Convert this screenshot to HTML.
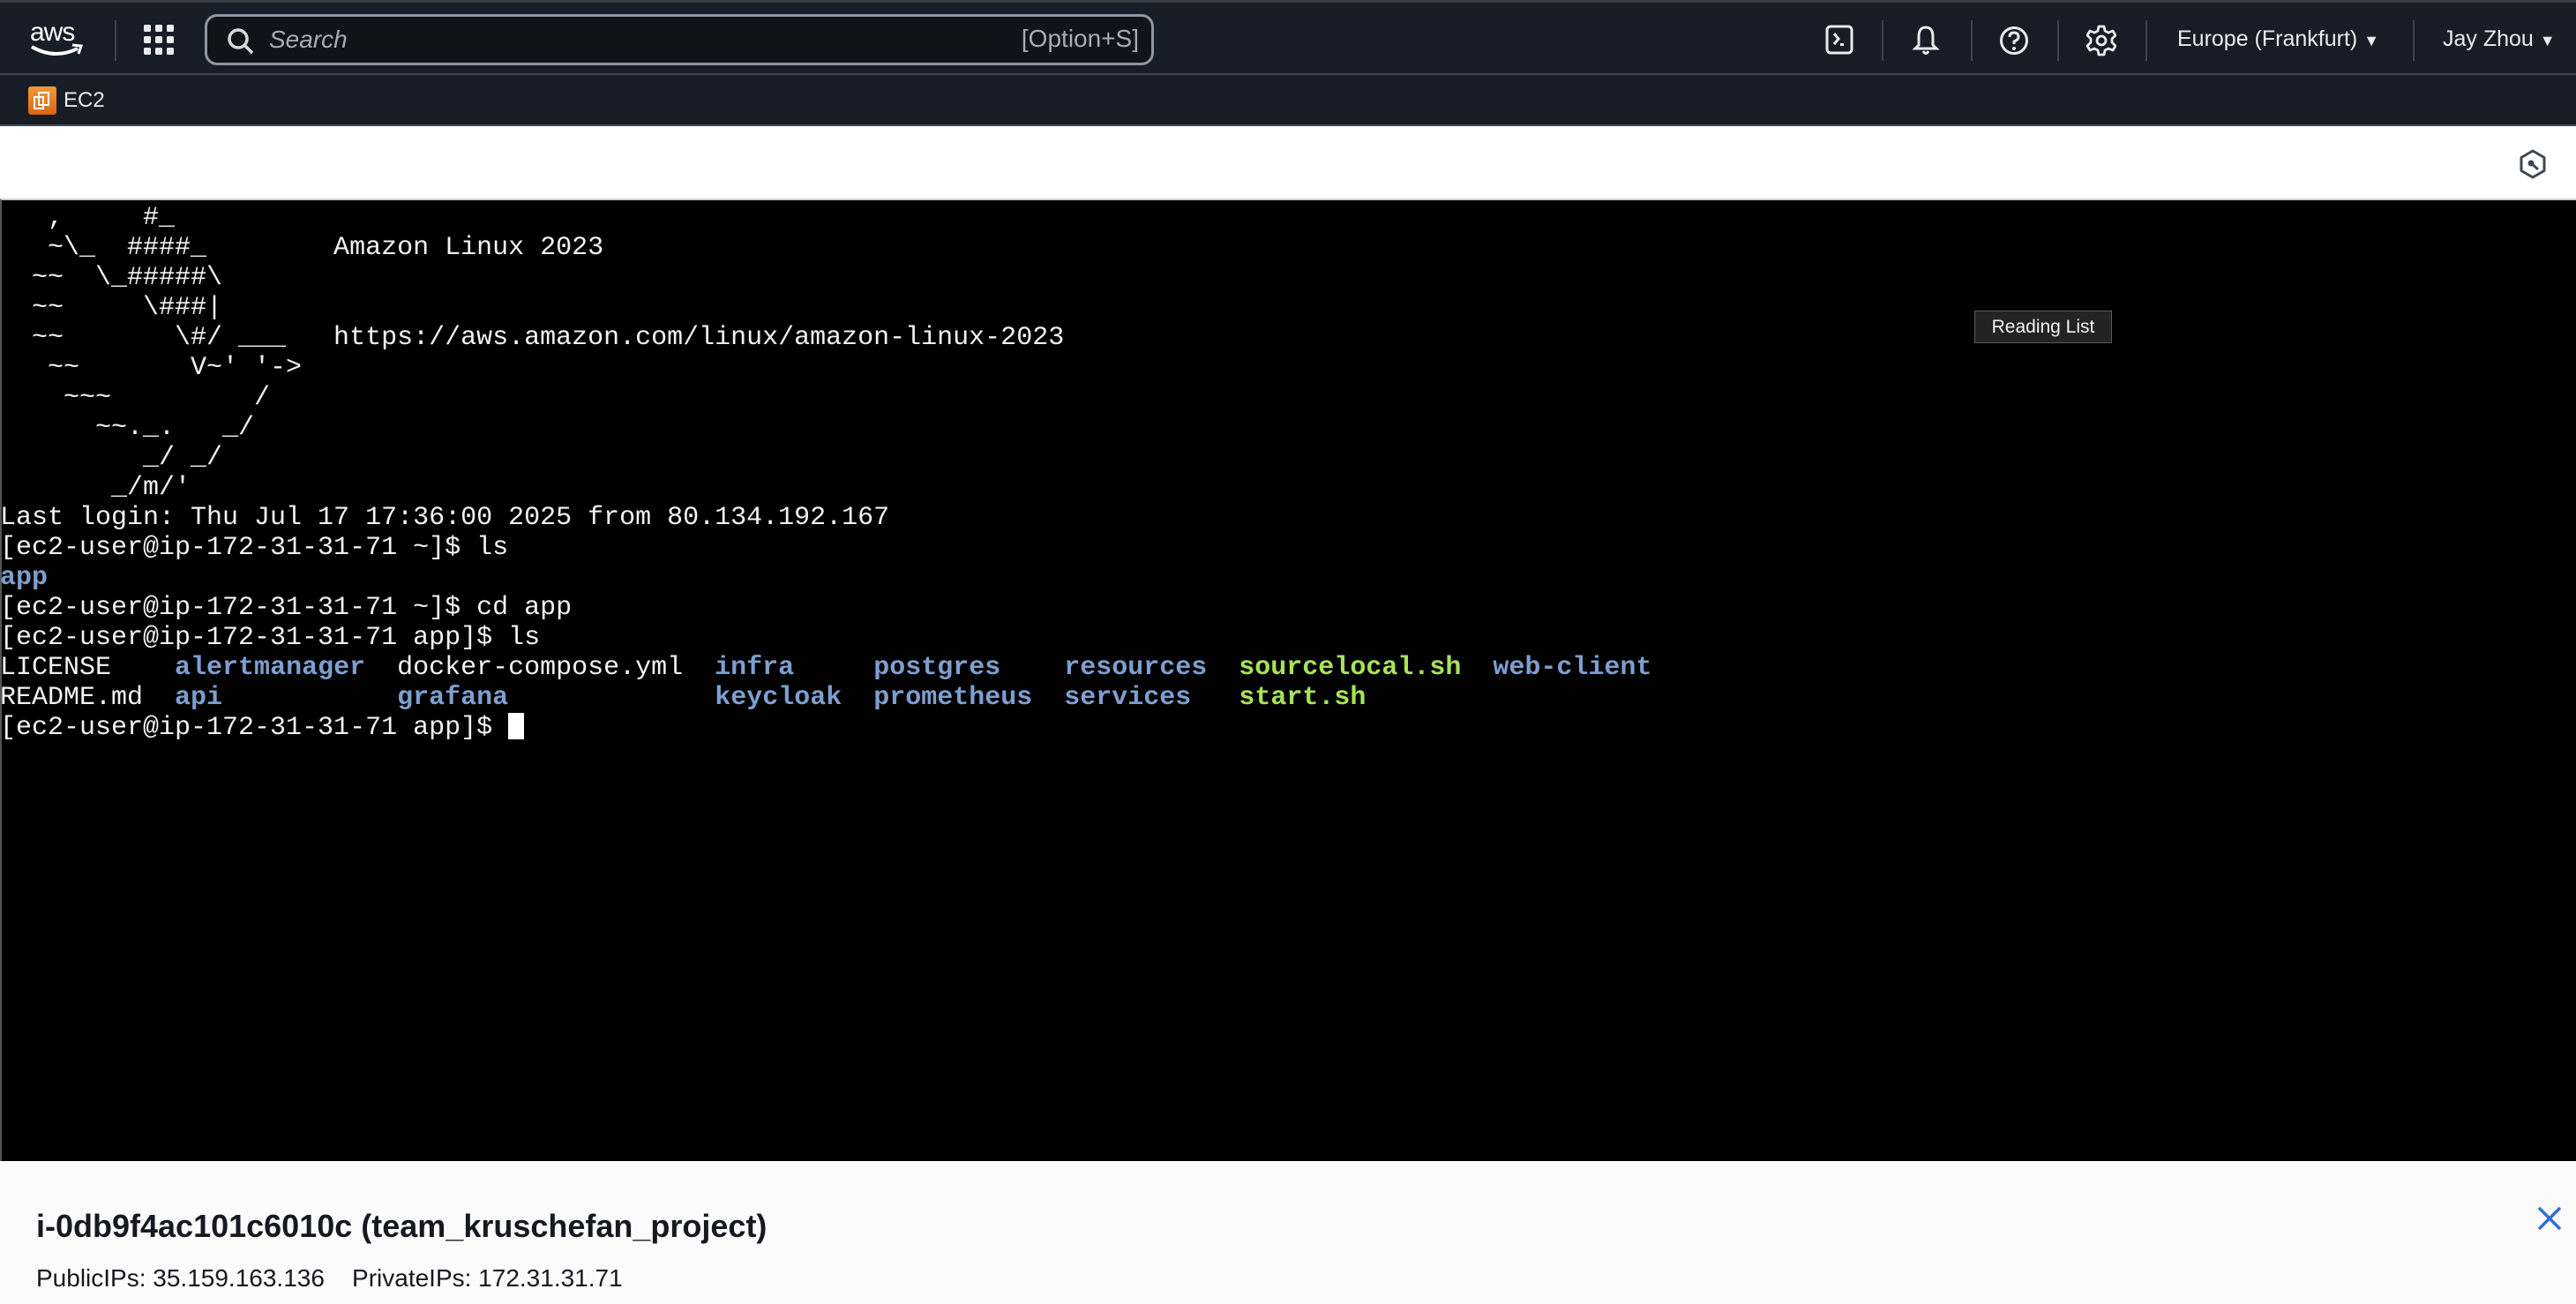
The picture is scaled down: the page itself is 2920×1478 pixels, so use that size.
<!DOCTYPE html>
<html><head><meta charset="utf-8"><style>
*{margin:0;padding:0;box-sizing:border-box}
html,body{width:2920px;height:1478px;overflow:hidden;background:#fff;font-family:"Liberation Sans",sans-serif}
#top{position:absolute;left:0;top:0;width:2920px;height:85px;background:#161d26;border-top:3px solid #3a3f46;border-bottom:2px solid #414750}
#sub{position:absolute;left:0;top:85px;width:2920px;height:58px;background:#161d26;border-bottom:2px solid #414750}
.t{position:absolute;color:#e9ebed;white-space:nowrap}
.div{position:absolute;top:20px;width:2px;height:46px;background:#3e4550}
#search{position:absolute;left:232px;top:13px;width:1076px;height:58px;border:3px solid #8d96a3;border-radius:14px;background:#0f141a}
#band{position:absolute;left:0;top:143px;width:2920px;height:83px;background:#fff}
#term{position:absolute;left:0;top:225px;width:2920px;height:1091px;background:#000;border-top:2px solid #cfcfcf;border-left:2px solid #555}
pre{font-family:"Liberation Mono",monospace;font-size:30px;line-height:34px;color:#f2f2f2;padding-top:3px;margin-left:-2px}
.b{color:#7d9fcf;font-weight:bold}.g{color:#a9e25a;font-weight:bold}
.cur{display:inline-block;width:18px;height:30px;background:#fff;vertical-align:-6px}
#tip{position:absolute;left:2238px;top:352px;width:156px;height:37px;background:#232323;border:1px solid #5a5a5a;color:#f2f2f2;font-size:21px;line-height:35px;text-align:center}
#bot{position:absolute;left:0;top:1316px;width:2920px;height:162px;background:#fbfbfb}
</style></head><body>
<div id="top">
 <svg style="position:absolute;left:32px;top:17px" width="66" height="46" viewBox="0 0 66 46">
  <text x="2" y="26" font-family="Liberation Sans" font-size="30" fill="#fff" letter-spacing="-1">aws</text>
  <path d="M4 33 Q30 48 56 35" stroke="#fff" stroke-width="4" fill="none"/>
  <path d="M50 31 L60 32 L57 41" stroke="#fff" stroke-width="3" fill="none"/>
 </svg>
 <div class="div" style="left:130px"></div>
 <svg style="position:absolute;left:163px;top:25px" width="34" height="34" viewBox="0 0 34 34" fill="#e9ebed">
  <rect x="0" y="0" width="8" height="8" rx="1.5"/><rect x="13" y="0" width="8" height="8" rx="1.5"/><rect x="26" y="0" width="8" height="8" rx="1.5"/>
  <rect x="0" y="13" width="8" height="8" rx="1.5"/><rect x="13" y="13" width="8" height="8" rx="1.5"/><rect x="26" y="13" width="8" height="8" rx="1.5"/>
  <rect x="0" y="26" width="8" height="8" rx="1.5"/><rect x="13" y="26" width="8" height="8" rx="1.5"/><rect x="26" y="26" width="8" height="8" rx="1.5"/>
 </svg>
 <div id="search">
  <svg style="position:absolute;left:21px;top:11px" width="34" height="34" viewBox="0 0 34 34"><circle cx="14" cy="14" r="10" stroke="#d5d9dd" stroke-width="3.5" fill="none"/><path d="M21 21 L30 30" stroke="#d5d9dd" stroke-width="3.5"/></svg>
  <div class="t" style="left:70px;top:10px;font-size:28px;font-style:italic;color:#a7adb5">Search</div>
  <div class="t" style="right:14px;top:9px;font-size:28px;color:#a7adb5">[Option+S]</div>
 </div>
 <svg style="position:absolute;left:2069px;top:25px" width="32" height="34" viewBox="0 0 32 34"><rect x="2" y="2" width="28" height="30" rx="4" stroke="#e9ebed" stroke-width="3" fill="none"/><path d="M10 10 L15 16 L10 22" stroke="#e9ebed" stroke-width="3" fill="none"/><rect x="17" y="21" width="4" height="3" fill="#e9ebed"/></svg>
 <div class="div" style="left:2133px"></div>
 <svg style="position:absolute;left:2167px;top:25px" width="32" height="36" viewBox="0 0 32 36"><path d="M16 3 C9 3 8 9 8 14 L8 23 L4 27 L28 27 L24 23 L24 14 C24 9 23 3 16 3Z" stroke="#e9ebed" stroke-width="3" fill="none"/><path d="M13 30 Q16 35 19 30" stroke="#e9ebed" stroke-width="3" fill="none"/></svg>
 <div class="div" style="left:2234px"></div>
 <svg style="position:absolute;left:2266px;top:26px" width="34" height="34" viewBox="0 0 34 34"><circle cx="17" cy="17" r="14.5" stroke="#e9ebed" stroke-width="3" fill="none"/><path d="M12 13 Q12 8 17 8 Q22 8 22 13 Q22 16 17 18 L17 21" stroke="#e9ebed" stroke-width="3" fill="none"/><circle cx="17" cy="26" r="2" fill="#e9ebed"/></svg>
 <div class="div" style="left:2332px"></div>
 <svg style="position:absolute;left:2365px;top:25px" width="34" height="36" viewBox="0 0 34 36"><path d="M14 2 L20 2 L21 7 L25 9 L30 7 L33 12 L29 16 L29 20 L33 24 L30 29 L25 27 L21 29 L20 34 L14 34 L13 29 L9 27 L4 29 L1 24 L5 20 L5 16 L1 12 L4 7 L9 9 L13 7Z" stroke="#e9ebed" stroke-width="2.8" fill="none" stroke-linejoin="round"/><circle cx="17" cy="18" r="5" stroke="#e9ebed" stroke-width="2.8" fill="none"/></svg>
 <div class="div" style="left:2432px"></div>
 <div class="t" style="left:2468px;top:27px;font-size:25px">Europe (Frankfurt) <span style="font-size:18px">▼</span></div>
 <div class="div" style="left:2735px"></div>
 <div class="t" style="left:2769px;top:27px;font-size:25px">Jay Zhou <span style="font-size:18px">▼</span></div>
</div>
<div id="sub">
 <div style="position:absolute;left:32px;top:13px;width:32px;height:32px;border-radius:3px;background:linear-gradient(#f29a3a,#d86613)">
  <svg width="32" height="32" viewBox="0 0 32 32"><rect x="12" y="7" width="11" height="14" stroke="#fff" stroke-width="2" fill="none"/><rect x="7" y="12" width="10" height="13" stroke="#fff" stroke-width="2" fill="none"/></svg>
 </div>
 <div class="t" style="left:72px;top:15px;font-size:24px">EC2</div>
</div>
<div id="band">
 <svg style="position:absolute;left:2856px;top:26px" width="30" height="34" viewBox="0 0 30 34"><path d="M15 2 L28 9.5 L28 24.5 L15 32 L2 24.5 L2 9.5Z" stroke="#414750" stroke-width="3" fill="none" stroke-linejoin="round"/><circle cx="13" cy="16" r="3.5" fill="#414750"/><path d="M13 16 L21 23" stroke="#414750" stroke-width="3"/></svg>
</div>
<div id="term"><pre>   ,     #_
   ~\_  ####_        Amazon Linux 2023
  ~~  \_#####\
  ~~     \###|
  ~~       \#/ ___   https://aws.amazon.com/linux/amazon-linux-2023
   ~~       V~' '->
    ~~~         /
      ~~._.   _/
         _/ _/
       _/m/'
Last login: Thu Jul 17 17:36:00 2025 from 80.134.192.167
[ec2-user@ip-172-31-31-71 ~]$ ls
<span class="b">app</span>
[ec2-user@ip-172-31-31-71 ~]$ cd app
[ec2-user@ip-172-31-31-71 app]$ ls
LICENSE    <span class="b">alertmanager</span>  docker-compose.yml  <span class="b">infra</span>     <span class="b">postgres</span>    <span class="b">resources</span>  <span class="g">sourcelocal.sh</span>  <span class="b">web-client</span>
README.md  <span class="b">api</span>           <span class="b">grafana</span>             <span class="b">keycloak</span>  <span class="b">prometheus</span>  <span class="b">services</span>   <span class="g">start.sh</span>
[ec2-user@ip-172-31-31-71 app]$ <span class="cur"></span></pre></div>
<div id="tip">Reading List</div>
<div id="bot">
 <div class="t" style="left:41px;top:53px;font-size:36px;font-weight:bold;color:#16191f">i-0db9f4ac101c6010c (team_kruschefan_project)</div>
 <div class="t" style="left:41px;top:117px;font-size:28px;color:#16191f">PublicIPs: 35.159.163.136&nbsp;&nbsp;&nbsp; PrivateIPs: 172.31.31.71</div>
 <svg style="position:absolute;left:2876px;top:51px" width="28" height="28" viewBox="0 0 28 28"><path d="M2 2 L26 26 M26 2 L2 26" stroke="#2f6fd8" stroke-width="3.5"/></svg>
</div>
</body></html>
